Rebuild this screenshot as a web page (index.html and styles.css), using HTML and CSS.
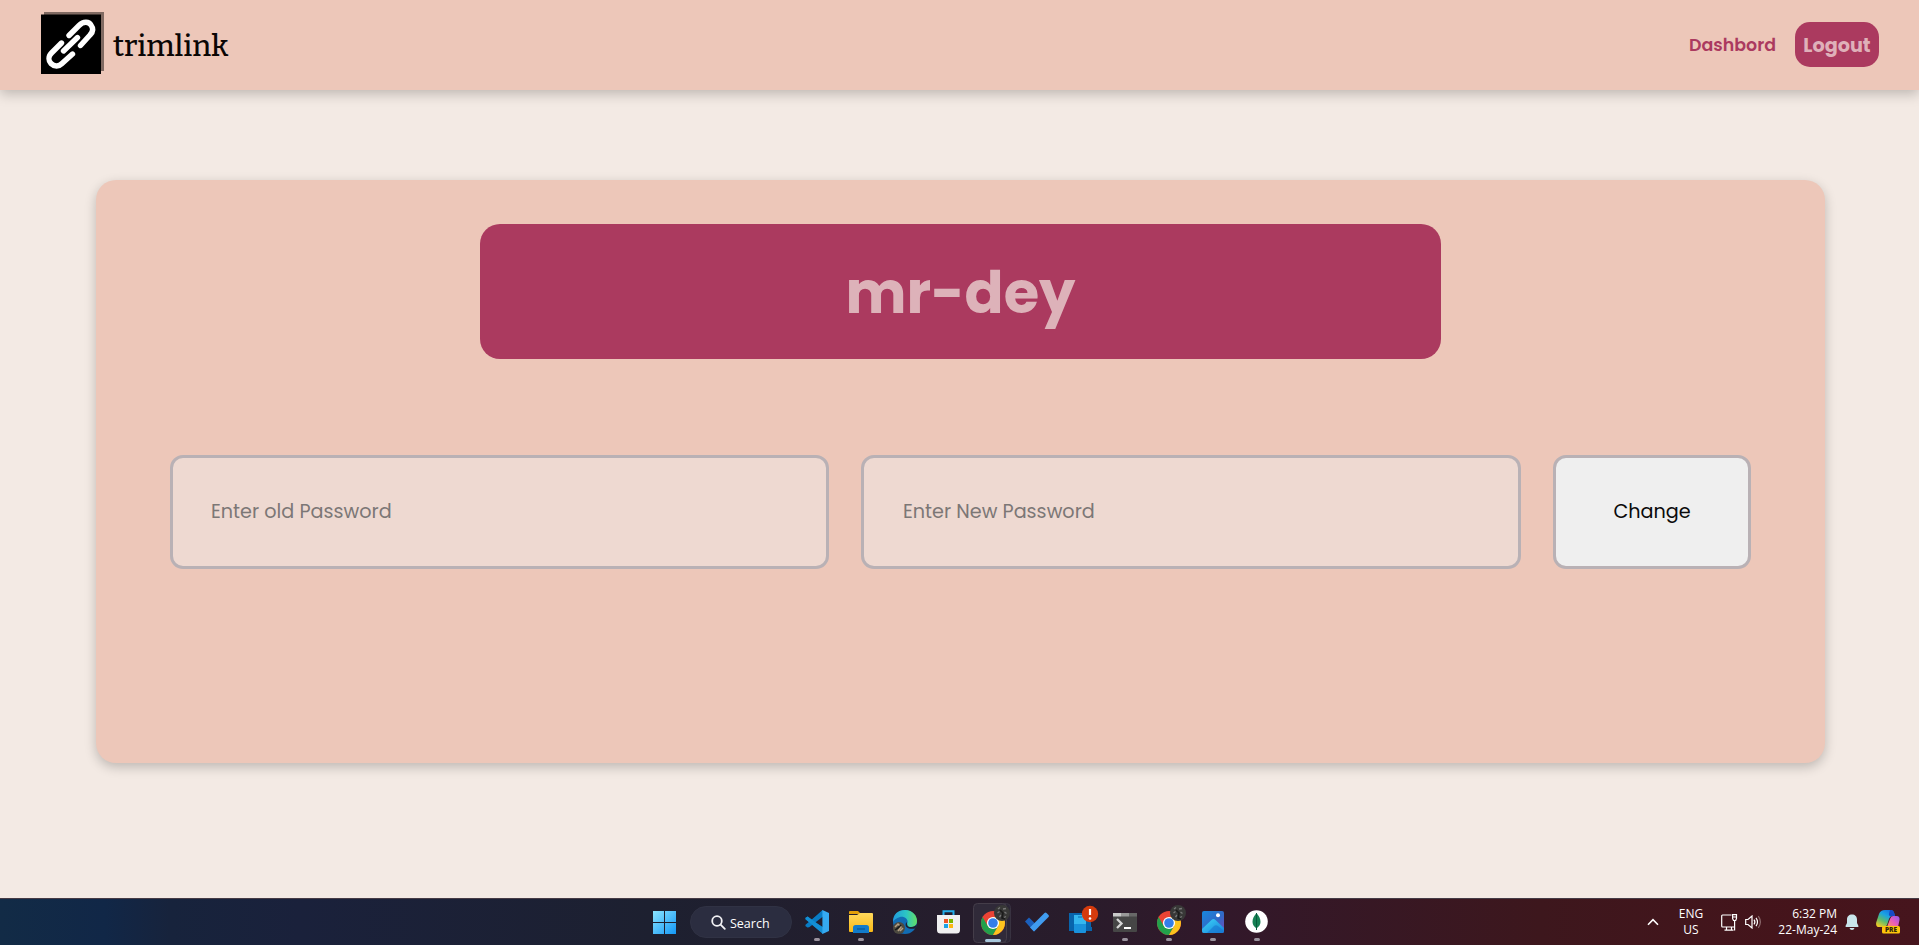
FILE: index.html
```html
<!DOCTYPE html>
<html lang="en">
<head>
<meta charset="utf-8">
<title>trimlink</title>
<link rel="stylesheet" href="styles.css">
</head>
<body>
<header class="navbar">
  <a class="brand">
    <svg class="brand-mark" width="63" height="63" viewBox="0 0 63 63">
      <rect x="3" y="0" width="60" height="59" fill="#806a62"/>
      <rect x="0" y="2.5" width="60" height="59.5" fill="#000"/>
      <g fill="none" stroke="#fff" stroke-width="5.4" stroke-linecap="round">
        <path d="M28 23.5L38 13.5C43 8.500 48 10 50 13C53 17 51.500 20.500 49 23L39.500 33.500"/>
        <path d="M22.500 39L36.500 25.500"/>
        <path d="M20.500 31L10.500 41C7 44.500 7.500 49 10 51.500C13.500 55 18 54.500 21 51.500L31.500 42"/>
      </g>
    </svg>
    <span class="brand-name">trimlink</span>
  </a>
  <nav class="nav-links">
    <a class="nav-link">Dashbord</a>
    <button class="logout">Logout</button>
  </nav>
</header>

<main class="page">
  <section class="profile-card">
    <h1 class="username">mr-dey</h1>
    <form class="password-form">
      <input class="field" type="text" placeholder="Enter old Password">
      <input class="field field-new" type="text" placeholder="Enter New Password">
      <button class="change" type="button">Change</button>
    </form>
  </section>
</main>

<footer class="taskbar">
  <svg class="defs" width="0" height="0">
    <defs>
      <linearGradient id="win" x1="0" y1="0" x2="1" y2="1"><stop offset="0" stop-color="#8be5ff"/><stop offset="1" stop-color="#1397f5"/></linearGradient>
      <linearGradient id="folder" x1="0" y1="0" x2="0" y2="1"><stop offset="0" stop-color="#ffd95c"/><stop offset="1" stop-color="#f9b916"/></linearGradient>
      <linearGradient id="edge" x1="0" y1="0" x2="1" y2="0"><stop offset="0" stop-color="#209bdd"/><stop offset=".55" stop-color="#2cc5c4"/><stop offset="1" stop-color="#63df65"/></linearGradient>
      <linearGradient id="photo" x1="0" y1="0" x2="1" y2="1"><stop offset="0" stop-color="#1788dd"/><stop offset=".55" stop-color="#3269c7"/><stop offset="1" stop-color="#7848b9"/></linearGradient>
      <linearGradient id="hill" x1="0" y1="0" x2="1" y2="1"><stop offset="0" stop-color="#3ed5f7"/><stop offset="1" stop-color="#1681dc"/></linearGradient>
      <linearGradient id="copA" x1=".8" y1="0" x2=".2" y2="1"><stop offset="0" stop-color="#166fe2"/><stop offset=".35" stop-color="#1aa3e4"/><stop offset=".65" stop-color="#5abb70"/><stop offset="1" stop-color="#f2cb24"/></linearGradient>
      <linearGradient id="copB" x1="1" y1="0" x2="0" y2="1"><stop offset="0" stop-color="#8e58ef"/><stop offset=".5" stop-color="#e75cba"/><stop offset="1" stop-color="#ff9462"/></linearGradient>
      <g id="chrome">
        <circle cx="12" cy="12" r="12" fill="#ea4335"/>
        <path d="M1.610 6A12 12 0 0 0 12 24L17.200 15L12 12L6.800 15Z" fill="#22a04b"/>
        <path d="M22.390 6A12 12 0 0 1 12 24L17.200 15L12 6Z" fill="#fcc31e"/>
        <circle cx="12" cy="12" r="6.100" fill="#fff"/>
        <circle cx="12" cy="12" r="4.800" fill="#347ee9"/>
      </g>
      <g id="avatar">
        <circle cx="8" cy="8" r="8" fill="#383837"/>
        <path d="M4 4L6 2.500M9 4L12 3.500M3.500 8L5.500 6.500M5.500 12L7 10M10.500 7L12.500 8.500M10 12.500L12 11.500" stroke="#777" stroke-width="1.300"/>
        <path d="M6 5L9 8L8 13L11 14" stroke="#1b1b1b" stroke-width="1.600" fill="none"/>
      </g>
    </defs>
  </svg>

  <div class="slot start">
    <svg width="23" height="23" viewBox="0 0 23 23"><path d="M0 0H11V11H0ZM12 0H23V11H12ZM0 12H11V23H0ZM12 12H23V23H12Z" fill="url(#win)"/></svg>
  </div>
  <div class="search">
    <svg width="15" height="15" viewBox="0 0 15 15" fill="none" stroke="#f2f2f5" stroke-width="1.800" stroke-linecap="round"><circle cx="6" cy="6" r="4.800"/><path d="M9.600 9.600L13.800 13.800"/></svg>
    <span class="search-label">Search</span>
  </div>
  <div class="slot open">
    <svg width="24" height="24" viewBox="0 0 24 24">
      <path d="M17.500 0L7 10L2.700 6.600L.4 7.800L.5 9.200L17.800 23.600L18 17L9 12L18 6Z" fill="#0875b9"/>
      <path d="M2.400 17.500L.4 16.100L.5 14.800L18 0V6.500L4.200 17.200Z" fill="#087cc5"/>
      <path d="M.5 7.900L2.600 6.600L18 17.500V24L.5 9.300Z" fill="#138fd4"/>
      <path d="M17.400 0L24 3V21L17.400 24Z" fill="#35aaf1"/>
    </svg>
  </div>
  <div class="slot open">
    <svg width="24" height="22" viewBox="0 0 24 22">
      <path d="M0 1Q0 0 1 0H9L12 3H0Z" fill="#e3a008"/><path d="M0 4H8L11 2H23Q24 2 24 3V20Q24 21 23 21H1Q0 21 0 20Z" fill="url(#folder)"/><path d="M4 22V16.500Q4 14 6.500 14H17.500Q20 14 20 16.500V22Z" fill="#127bca"/><path d="M8 18H16" stroke="#075c9d" stroke-width="1.300"/>
    </svg>
  </div>
  <div class="slot">
    <svg width="24" height="24" viewBox="0 0 24 24">
      <circle cx="12" cy="12" r="12" fill="#126cb3"/>
      <path d="M0 12C0 4 5 0 12 0C20 0 24 6 24 11C24 16 20 17.500 17 17.200C14 17 13 15.500 14.500 13C15.500 9 11 6 7 7C3 8 1 10 0 12Z" fill="url(#edge)"/>
      <path d="M13.500 12C11 16 14 20 22.500 18.500L24 14C22 17.500 16 18 14.500 15.500Z" fill="#1d2031"/>
      <circle cx="6" cy="18" r="6" fill="#4d4a40"/><path d="M2 17L5 14L8 17L5 21M7 21L10 18" stroke="#b5a083" stroke-width="1.500" fill="none"/><path d="M2 20L5 18L8 15" stroke="#171918" stroke-width="1.500"/>
    </svg>
  </div>
  <div class="slot">
    <svg width="24" height="24" viewBox="0 0 24 24">
      <path d="M6.500 6V1.200H16.500V6" fill="none" stroke="#23aeea" stroke-width="2"/><path d="M0 5H23V20Q23 23.500 19.500 23.500H3.500Q0 23.500 0 20Z" fill="#f0f0f1"/><path d="M7 9H11V13H7Z" fill="#ee5527"/><path d="M12 9H16V13H12Z" fill="#7ab800"/><path d="M7 14H11V18H7Z" fill="#18a2e8"/><path d="M12 14H16V18H12Z" fill="#fbb813"/>
    </svg>
  </div>
  <div class="slot active">
    <svg width="44" height="47" viewBox="0 0 44 47">
      <rect x="6.500" y="4.500" width="33" height="39" rx="4" fill="#2b2636" stroke="#383240"/>
      <rect x="2.500" y="4.500" width="33" height="39" rx="4" fill="#302a39" stroke="#443d49"/>
      <use href="#chrome" x="10" y="12"/><use href="#avatar" x="23" y="6"/>
      <rect x="14" y="40" width="16" height="3" rx="1.500" fill="#a8c8dd"/>
    </svg>
  </div>
  <div class="slot">
    <svg width="24" height="20" viewBox="0 0 24 20"><path d="M0 9.500L4 5.500L13.500 15L9 19.500Z" fill="#1b60bd"/><path d="M5 15.500L19.500 1Q20.500 0 21.500 1L23.500 3Q24.300 4 23.500 5L9 19.500Z" fill="#409cf0"/></svg>
  </div>
  <div class="slot">
    <svg width="44" height="47" viewBox="0 0 44 47">
      <path d="M10 14H32V30H10Z" fill="#0864ac"/><path d="M10 28H17V32H10ZM27 28H33V32H27Z" fill="#0763ab"/><rect x="15" y="16" width="12" height="18" rx="1" fill="#1992dc"/><path d="M15 16H27V25H15Z" fill="#35b7ef"/><path d="M19 18H23" stroke="#086eb0"/>
      <circle cx="31" cy="15" r="8.200" fill="#d53b0d"/><path d="M31 10V16" stroke="#fff" stroke-width="2.200"/><circle cx="31" cy="19.500" r="1.300" fill="#fff"/>
    </svg>
  </div>
  <div class="slot open">
    <svg width="24" height="19" viewBox="0 0 24 19"><rect width="24" height="19" rx="1" fill="#464646"/><path d="M0 0H8V3.500H0Z" fill="#c9c9c9"/><path d="M8 0H16V3.500H8Z" fill="#999"/><path d="M16 0H24V3.500H16Z" fill="#686868"/><path d="M4 6L8.500 10.500L4 15" fill="none" stroke="#d5d5d5" stroke-width="2.300"/><path d="M11 15H18" stroke="#fff" stroke-width="2"/></svg>
  </div>
  <div class="slot open">
    <svg width="44" height="47" viewBox="0 0 44 47"><use href="#chrome" x="10" y="12"/><use href="#avatar" x="23" y="6"/></svg>
  </div>
  <div class="slot open">
    <svg width="22" height="22" viewBox="0 0 22 22"><rect width="22" height="22" rx="2" fill="url(#photo)"/><path d="M0 18L9.500 9Q11.500 7 13.500 9L22 17V20Q22 22 20 22H2Q0 22 0 20Z" fill="url(#hill)"/><path d="M5 22L12 15Q14 13.500 16 15L22 20Q22 22 20 22Z" fill="#1775ce" opacity=".6"/><circle cx="16" cy="4.300" r="2" fill="#fff"/></svg>
  </div>
  <div class="slot open">
    <svg width="24" height="24" viewBox="0 0 24 24"><circle cx="11.500" cy="11.500" r="11.300" fill="#fff"/><path d="M11.500 3C9 6 7.500 8.500 7.500 12C7.500 15 9.500 17 11 18V20H12V18C14 16.500 15.500 14.500 15.500 12C15.500 8.500 14 6 11.500 3Z" fill="#168154"/><path d="M11.500 3V20" stroke="#075c3d"/></svg>
  </div>

  <div class="tray">
    <svg class="chevron" width="12" height="8" viewBox="0 0 12 8" fill="none" stroke="#fff" stroke-width="1.600"><path d="M1 6.700L6 1.700L11 6.700"/></svg>
    <div class="lang"><span>ENG</span><span>US</span></div>
    <svg class="network" width="17" height="17" viewBox="0 0 17 17" fill="none" stroke="#fff" stroke-width="1.200"><path d="M10.500 1H1.500Q.7 1 .7 2V12Q.7 13 1.500 13H13.500M5.500 13V16M10.500 13V16M3.500 16.200H12.500M11.600 .7H15.500V4.500L14.700 6.500H12.500L11.600 4.500ZM11.600 3H15.500M13.600 6.500V16.500"/></svg>
    <svg class="volume" width="17" height="14" viewBox="0 0 17 14" fill="none" stroke="#fff" stroke-width="1.200"><path d="M.7 4.500H3L7 1V13L3 9.500H.7Z"/><path d="M9 4.700Q10.800 7 9 9.300M11 2.800Q14 7 11 11.200"/><path d="M13.300 1.200Q17.500 7 13.300 12.800" stroke="#8a686b"/></svg>
    <div class="clock"><span>6:32 PM</span><span>22-May-24</span></div>
    <svg class="bell" width="14" height="16" viewBox="0 0 14 16" fill="#c9e5eb"><path d="M.5 12L2 9V5.500C2 2.500 4 .5 7 .5S12 2.500 12 5.500V9L13.500 12Q13.700 13 12.800 13H1.200Q.3 13 .5 12ZM4.500 14H9.500Q9 16 7 16T4.500 14Z"/></svg>
    <svg class="copilot" width="24" height="24" viewBox="0 0 24 24">
      <path d="M9 0H15Q17.500 0 18 2.500L19 6H16Q14 6 13 9L11 15Q10 17 7 17H3Q-.5 17 .2 12.500L3 4Q4.500 0 9 0Z" fill="url(#copA)"/><path d="M14 0H15Q17.500 0 18 2.500L19 6H15Q12.500 6 13 4Z" fill="#1749c5"/><path d="M17 6H20.500Q24 6 23.500 10L22 17H11L14 9Q15 6 17 6Z" fill="url(#copB)"/>
      <rect x="6" y="16" width="18" height="7.500" rx="1.500" fill="#fdc60b"/><text class="pre" x="15" y="22.300" text-anchor="middle">PRE</text>
    </svg>
  </div>
</footer>
</body>
</html>
```

FILE: styles.css
```css
* { box-sizing: border-box; }

body {
  margin: 0;
  height: 945px;
  overflow: hidden;
  display: flex;
  flex-direction: column;
  background: #f3eae4;
  font-family: Poppins, Inter, sans-serif;
}

.navbar {
  height: 90px;
  flex: none;
  display: flex;
  align-items: center;
  justify-content: space-between;
  padding: 0 40px 0 41px;
  background: #edc7b9;
  box-shadow: 0 4px 12px rgba(0, 0, 0, .22);
}

.brand { display: flex; align-items: center; gap: 9px; }
.brand-mark { display: block; margin-top: -4px; }
.brand-name { padding-top: 2px; font: 500 29.700px/40px Bitter, "DejaVu Serif", serif; color: #0a0605; }

.nav-links { display: flex; align-items: center; gap: 19px; }
.nav-link { color: #ab3a5f; font-size: 17.400px; font-weight: 600; }

.logout {
  width: 84px;
  height: 45px;
  margin-top: -1px;
  padding: 1px 0 0;
  border: 0;
  border-radius: 15px;
  background: #ab3a5f;
  color: #dfb0b9;
  font: 700 19.200px Poppins, Inter, sans-serif;
}

.page { flex: 1; padding: 90px 94px 0 96px; }

.profile-card {
  height: 583px;
  padding: 44px 74px 0;
  border-radius: 20px;
  background: #edc7b9;
  box-shadow: 0 4px 12px rgba(0, 0, 0, .22);
}

.username {
  width: 961px;
  height: 135px;
  margin: 0 auto;
  border-radius: 20px;
  background: #ab3a5f;
  color: #ddb2b9;
  font-size: 57.600px;
  font-weight: 700;
  line-height: 138px;
  text-align: center;
}

.password-form {
  display: grid;
  grid-template-columns: 659px 1fr 198px;
  gap: 32px;
  height: 114px;
  margin-top: 96px;
}

.field, .change {
  min-width: 0;
  border: 3px solid #b9b1b5;
  border-radius: 13px;
  font: 19.200px Poppins, Inter, sans-serif;
}

.field { padding: 0 38px 1px; background: #eed9d1; }
.field-new { padding-left: 39px; }
.field::placeholder { color: #7c7776; opacity: 1; }
.change { padding: 0 0 1px; background: #efefef; color: #0b0b0b; }

.taskbar {
  flex: none;
  height: 47px;
  display: flex;
  align-items: center;
  padding-left: 642px;
  border-top: 1px solid #453b45;
  background: linear-gradient(90deg, #122b46 0, #112747 105px, #17233c 170px, #1a213b 300px, #1d2030 650px, #291c2b 1070px, #32182a 1230px, #3d171d 1540px, #45141b 1800px, #46151d 100%);
  color: #fff;
  font-family: "Segoe UI", "Open Sans", sans-serif;
}

.defs { position: absolute; }

.slot {
  position: relative;
  width: 44px;
  height: 46px;
  flex: none;
  display: flex;
  align-items: center;
  justify-content: center;
}
.slot svg { display: block; flex: none; }

.open::after {
  content: "";
  position: absolute;
  bottom: 4px;
  left: 19px;
  width: 6px;
  height: 3px;
  border-radius: 2px;
  background: #9b949f;
}

.search {
  width: 102px;
  height: 32px;
  flex: none;
  display: flex;
  align-items: center;
  gap: 4px;
  margin: 0 3px 0 4px;
  padding-left: 20px;
  border-radius: 16px;
  background: #2b2d40;
  border: 1px solid #303244;
  font-size: 12.500px;
}
.search-label { padding-top: 2px; }

.tray {
  flex: 1;
  height: 46px;
  display: flex;
  align-items: center;
  justify-content: flex-end;
  padding-right: 19px;
}
.tray svg { flex: none; display: block; }

.lang, .clock {
  display: flex;
  flex-direction: column;
  font-size: 12px;
  line-height: 16px;
}
.lang { width: 24px; margin: 0 18px 0 20px; align-items: center; }
.network { margin-right: 7px; }
.clock { width: 62px; margin: 0 8px 0 13px; align-items: flex-end; white-space: nowrap; }
.bell { margin-right: 17px; }
.pre { font: 800 6.500px "Open Sans", sans-serif; fill: #30260a; }
```
